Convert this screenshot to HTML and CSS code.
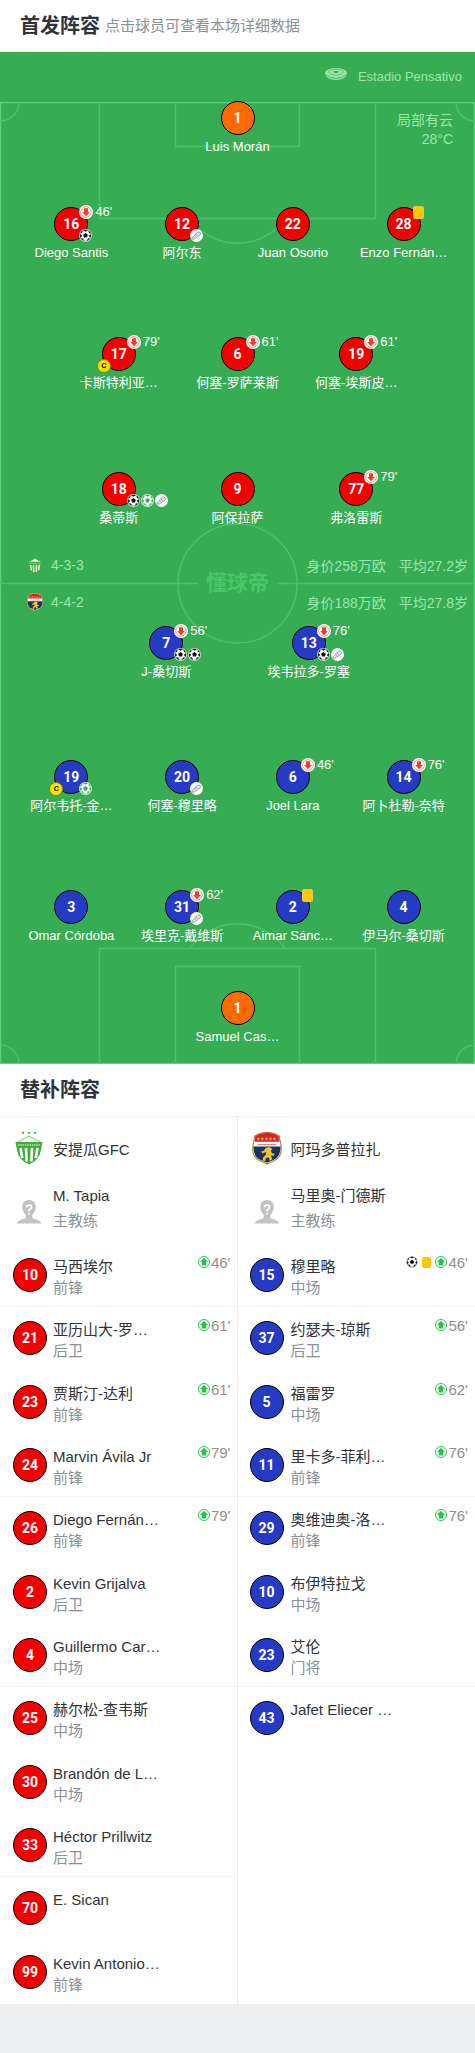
FILE: index.html
```
<!DOCTYPE html>
<html lang="zh-CN">
<head>
    <meta charset="UTF-8">
    <meta name="viewport" content="width=device-width, initial-scale=1.0">
    <title>首发阵容</title>
    <link rel="stylesheet" href="styles.css">
</head>
<body>
    <!-- Icônes partagées -->
    <svg class="defs" aria-hidden="true">
        <symbol id="i-ball" viewBox="0 0 14 14">
            <circle cx="7" cy="7" r="7" fill="#fff"/>
            <circle cx="7" cy="7" r="6" fill="none" stroke="currentColor" stroke-width=".5"/>
            <path fill="currentColor" d="M7 4.400l2.500 1.800-.9 2.900H5.400l-.9-2.900zM4.600 1.300Q7 .3 9.400 1.300L7 3zM13 5.700q.2 2-.8 3.900l-1.600-2.200zM1 5.700q-.2 2 .8 3.900l1.600-2.200zM9.400 10.300l2.500-.3q-1.200 1.900-3.200 2.700zM4.600 10.300L2.100 10q1.200 1.900 3.200 2.700zM10.500 1.900q1.400 1 2.100 2.600l-2-.2zM3.500 1.900q-1.400 1-2.100 2.600l2-.2z"/>
        </symbol>
        <symbol id="i-boot" viewBox="0 0 14 14">
            <circle cx="7" cy="7" r="7" fill="#fff"/>
            <path fill="#e4e4e4" stroke="#777" stroke-width=".7" d="M2 9.500Q5 8 6.500 4.600L9 3l2.600 1.500Q11 7.500 8.300 8.200L5 10.700 2.400 11z"/>
            <path fill="none" stroke="#888" stroke-width=".6" d="M6.300 5.500l2 1.500M5.300 7.200l1.500 1.400"/>
        </symbol>
        <symbol id="i-down" viewBox="0 0 14 14">
            <circle cx="7" cy="7" r="7" fill="#fff"/>
            <circle cx="7" cy="7" r="5.300" fill="none" stroke="#f77b6d" stroke-width=".8"/>
            <path fill="#fa3b25" d="M5 3.300h4v3.700h1.900L7 11.200 3.100 7H5z"/>
        </symbol>
        <symbol id="i-up" viewBox="0 0 12 12">
            <circle cx="6" cy="6" r="5.500" fill="#fff" stroke="#2fc455" stroke-width="1"/>
            <path fill="#20c840" d="M6 1.800l4 4.100H8.200v3.500H3.800V5.900H2z"/>
        </symbol>
        <symbol id="i-stadium" viewBox="0 0 22 12">
            <ellipse cx="11" cy="5" rx="11" ry="5" fill="#9ae6aa"/>
            <path d="M0 5q1 7 11 7t11-7q-3 5-11 5T0 5z" fill="#9ae6aa"/>
            <ellipse cx="11" cy="4" rx="7" ry="3" fill="none" stroke="#37ad53" stroke-width=".6"/>
            <ellipse cx="11" cy="4" rx="3" ry="1" fill="#37ad53"/>
            <path d="M1 7q4 3.500 10 3.500T21 7" fill="none" stroke="#37ad53" stroke-width=".7"/>
        </symbol>
        <symbol id="i-antigua" viewBox="0 0 28 34">
            <path fill="#3fae3a" d="M8 0l.5 1.300h1.400L8.800 2.100l.4 1.300L8 2.600l-1.200.8.400-1.300L6.100 1.300h1.400zM14 0l.5 1.300h1.400l-1.100.8.400 1.300-1.200-.8-1.200.8.400-1.300-1.100-.8h1.400zM20 0l.5 1.300h1.400l-1.100.8.400 1.300-1.200-.8-1.200.8.400-1.300-1.100-.8h1.400z"/>
            <path fill="#fff" stroke="#55bd50" stroke-width=".8" d="M2 11.500L14 5l12 6.500z"/>
            <path fill="#3fae3a" d="M.500 11h27l-1.500 8q-1.500 10-12 14.500Q3.500 29 2 19z"/>
            <path stroke="#fff" stroke-width="2.600" d="M5.500 17l1.800 10M11 17l.6 13.500M17 17l-.6 13.500M22.500 17l-1.800 10"/>
            <path fill="none" stroke="#b7e2b2" stroke-width="1.400" stroke-dasharray="1.500 .8" d="M3 14h22"/>
        </symbol>
        <symbol id="i-amat" viewBox="0 0 31 34">
            <path fill="#fff" stroke="#b4883b" stroke-width="1.200" d="M15.500.700q5 .3 9 1.800l4 2.300q-.5 3 .8 5.200l1 7.500q0 9-7 12.500-4 2-7.800 3.400-3.800-1.400-7.800-3.400-7-3.500-7-12.500l1-7.500q1.300-2.200.8-5.200l4-2.300q4-1.500 9-1.800z"/>
            <path fill="#d7232b" d="M15.500 1.300q5 .3 9 1.800l3.300 2q-.5 2.700.8 5.400H2.400q1.300-2.700.8-5.400l3.300-2q4-1.500 9-1.800z"/>
            <path fill="#17335f" d="M1.500 15.500h28q.3 10-6.500 13.500-4 2-7.500 3.300Q12 31 8 29 1.200 25.500 1.500 15.500z"/>
            <path stroke="#f4d03c" stroke-width="2" stroke-dasharray="2 2.200" d="M5.500 7.500h21"/>
            <path stroke="#e56b70" d="M6 13.500h19"/>
            <path fill="#f0c230" d="M14 17l4-1 3 2-1.500 1.500 1 3 3 .5-1 2-3-.3 1.500 4-2.500 1.500-1.300-3.700-3 1-.2 2.700h-3l.5-3.500 3-3-.3-2.500-3 1.500L9 21l3.500-1.500z"/>
        </symbol>
        <symbol id="i-coach" viewBox="0 0 24 24">
            <path fill="#c3c3c3" d="M12 0c4.500 0 7 3 6.800 7.500-.2 3.500-2 5.500-3.500 7.500v2.500q0 1.200 3 1.800 5.500 1.200 5.700 4.200H0q.2-3 5.700-4.200 3-.6 3-1.800V15C7.200 13 5.400 11 5.200 7.500 5 3 7.500 0 12 0z"/>
            <path fill="none" stroke="#fff" stroke-width="1.600" d="M9.500 7.300Q9.500 5 12 5t2.500 2.300Q14.500 9 12 10v1.500M12 12.700v1.700"/>
        </symbol>
    </svg>

    <header class="title-bar">
        <h1>首发阵容</h1>
        <span>点击球员可查看本场详细数据</span>
    </header>

    <main class="pitch">
        <!-- Lignes du terrain -->
        <svg class="lines" viewBox="0 0 475 962" preserveAspectRatio="none" aria-hidden="true">
            <path class="edge" d="M.5.5h474v961H.5z"/>
            <path d="M99.500 0v116.500h276V0M175.500 0v44.500h124V0M99.500 962V846.500h276V962M175.500 962v-97.500h124V962"/>
            <path d="M190 116.500a58 58 0 0 0 95 0M190 846.500a58 58 0 0 1 95 0"/>
            <path d="M0 19a19 19 0 0 0 19-19M475 19a19 19 0 0 1-19-19M0 943a19 19 0 0 1 19 19M475 943a19 19 0 0 0-19 19"/>
            <circle cx="237.500" cy="481.500" r="59.500"/>
            <path d="M0 481.500h198M277 481.500h198"/>
        </svg>
        <div class="watermark">懂球帝</div>
        <div class="weather">局部有云<br>28°C</div>

        <div class="stadium">
            <svg><use href="#i-stadium"/></svg>
            <span>Estadio Pensativo</span>
        </div>

        <section class="team home">
            <div class="line one">
                <a class="player" href="#"><span class="num keeper">1</span><span class="name">Luis Morán</span></a>
            </div>
            <div class="line four">
                <a class="player" href="#"><span class="num">16<i class="off"><svg><use href="#i-down"/></svg>46'</i><i class="events"><svg><use href="#i-ball"/></svg></i></span><span class="name">Diego Santis</span></a>
                <a class="player" href="#"><span class="num">12<i class="events"><svg><use href="#i-boot"/></svg></i></span><span class="name">阿尔东</span></a>
                <a class="player" href="#"><span class="num">22</span><span class="name">Juan Osorio</span></a>
                <a class="player" href="#"><span class="num">28<i class="card"></i></span><span class="name">Enzo Fernán…</span></a>
            </div>
            <div class="line three">
                <a class="player" href="#"><span class="num">17<i class="off"><svg><use href="#i-down"/></svg>79'</i><i class="captain">C</i></span><span class="name">卡斯特利亚…</span></a>
                <a class="player" href="#"><span class="num">6<i class="off"><svg><use href="#i-down"/></svg>61'</i></span><span class="name">何塞-罗萨莱斯</span></a>
                <a class="player" href="#"><span class="num">19<i class="off"><svg><use href="#i-down"/></svg>61'</i></span><span class="name">何塞-埃斯皮…</span></a>
            </div>
            <div class="line three">
                <a class="player" href="#"><span class="num">18<i class="events"><svg><use href="#i-ball"/></svg><svg class="penalty"><use href="#i-ball"/></svg><svg><use href="#i-boot"/></svg></i></span><span class="name">桑蒂斯</span></a>
                <a class="player" href="#"><span class="num">9</span><span class="name">阿保拉萨</span></a>
                <a class="player" href="#"><span class="num">77<i class="off"><svg><use href="#i-down"/></svg>79'</i></span><span class="name">弗洛雷斯</span></a>
            </div>
        </section>

        <div class="info">
            <svg><use href="#i-antigua"/></svg>
            <span class="formation">4-3-3</span>
            <span>身价258万欧</span>
            <span>平均27.2岁</span>
        </div>
        <div class="info">
            <svg><use href="#i-amat"/></svg>
            <span class="formation">4-4-2</span>
            <span>身价188万欧</span>
            <span>平均27.8岁</span>
        </div>

        <section class="team away">
            <div class="line two">
                <a class="player" href="#"><span class="num">7<i class="off"><svg><use href="#i-down"/></svg>56'</i><i class="events"><svg><use href="#i-ball"/></svg><svg><use href="#i-ball"/></svg></i></span><span class="name">J-桑切斯</span></a>
                <a class="player" href="#"><span class="num">13<i class="off"><svg><use href="#i-down"/></svg>76'</i><i class="events"><svg><use href="#i-ball"/></svg><svg><use href="#i-boot"/></svg></i></span><span class="name">埃韦拉多-罗塞</span></a>
            </div>
            <div class="line four">
                <a class="player" href="#"><span class="num">19<i class="captain">C</i><i class="events"><svg class="penalty"><use href="#i-ball"/></svg></i></span><span class="name">阿尔韦托-金…</span></a>
                <a class="player" href="#"><span class="num">20<i class="events"><svg><use href="#i-boot"/></svg></i></span><span class="name">何塞-穆里略</span></a>
                <a class="player" href="#"><span class="num">6<i class="off"><svg><use href="#i-down"/></svg>46'</i></span><span class="name">Joel Lara</span></a>
                <a class="player" href="#"><span class="num">14<i class="off"><svg><use href="#i-down"/></svg>76'</i></span><span class="name">阿卜杜勒-奈特</span></a>
            </div>
            <div class="line four last">
                <a class="player" href="#"><span class="num">3</span><span class="name">Omar Córdoba</span></a>
                <a class="player" href="#"><span class="num">31<i class="off"><svg><use href="#i-down"/></svg>62'</i><i class="events"><svg><use href="#i-boot"/></svg></i></span><span class="name">埃里克-戴维斯</span></a>
                <a class="player" href="#"><span class="num">2<i class="card"></i></span><span class="name">Aimar Sánc…</span></a>
                <a class="player" href="#"><span class="num">4</span><span class="name">伊马尔-桑切斯</span></a>
            </div>
            <div class="line one">
                <a class="player" href="#"><span class="num keeper">1</span><span class="name">Samuel Cas…</span></a>
            </div>
        </section>
    </main>

    <h2 class="subs-title">替补阵容</h2>

    <section class="subs">
        <div class="column home">
            <div class="club"><svg><use href="#i-antigua"/></svg><span>安提瓜GFC</span></div>
            <div class="coach"><svg><use href="#i-coach"/></svg><div><p>M. Tapia</p><p class="role">主教练</p></div></div>
            <a class="sub" href="#"><span class="num">10</span><span class="who">马西埃尔<small>前锋</small></span><span class="on"><svg><use href="#i-up"/></svg>46'</span></a>
            <a class="sub" href="#"><span class="num">21</span><span class="who">亚历山大-罗…<small>后卫</small></span><span class="on"><svg><use href="#i-up"/></svg>61'</span></a>
            <a class="sub" href="#"><span class="num">23</span><span class="who">贾斯汀-达利<small>前锋</small></span><span class="on"><svg><use href="#i-up"/></svg>61'</span></a>
            <a class="sub" href="#"><span class="num">24</span><span class="who">Marvin Ávila Jr<small>前锋</small></span><span class="on"><svg><use href="#i-up"/></svg>79'</span></a>
            <a class="sub" href="#"><span class="num">26</span><span class="who">Diego Fernán…<small>前锋</small></span><span class="on"><svg><use href="#i-up"/></svg>79'</span></a>
            <a class="sub" href="#"><span class="num">2</span><span class="who">Kevin Grijalva<small>后卫</small></span></a>
            <a class="sub" href="#"><span class="num">4</span><span class="who">Guillermo Car…<small>中场</small></span></a>
            <a class="sub" href="#"><span class="num">25</span><span class="who">赫尔松-查韦斯<small>中场</small></span></a>
            <a class="sub" href="#"><span class="num">30</span><span class="who">Brandón de L…<small>中场</small></span></a>
            <a class="sub" href="#"><span class="num">33</span><span class="who">Héctor Prillwitz<small>后卫</small></span></a>
            <a class="sub" href="#"><span class="num">70</span><span class="who">E. Sican</span></a>
            <a class="sub" href="#"><span class="num">99</span><span class="who">Kevin Antonio…<small>前锋</small></span></a>
        </div>
        <div class="column away">
            <div class="club"><svg><use href="#i-amat"/></svg><span>阿玛多普拉扎</span></div>
            <div class="coach"><svg><use href="#i-coach"/></svg><div><p>马里奥-门德斯</p><p class="role">主教练</p></div></div>
            <a class="sub" href="#"><span class="num">15</span><span class="who">穆里略<small>中场</small></span><span class="on"><svg class="goal"><use href="#i-ball"/></svg><i class="yellow"></i><svg><use href="#i-up"/></svg>46'</span></a>
            <a class="sub" href="#"><span class="num">37</span><span class="who">约瑟夫-琼斯<small>后卫</small></span><span class="on"><svg><use href="#i-up"/></svg>56'</span></a>
            <a class="sub" href="#"><span class="num">5</span><span class="who">福雷罗<small>中场</small></span><span class="on"><svg><use href="#i-up"/></svg>62'</span></a>
            <a class="sub" href="#"><span class="num">11</span><span class="who">里卡多-菲利…<small>前锋</small></span><span class="on"><svg><use href="#i-up"/></svg>76'</span></a>
            <a class="sub" href="#"><span class="num">29</span><span class="who">奥维迪奥-洛…<small>前锋</small></span><span class="on"><svg><use href="#i-up"/></svg>76'</span></a>
            <a class="sub" href="#"><span class="num">10</span><span class="who">布伊特拉戈<small>中场</small></span></a>
            <a class="sub" href="#"><span class="num">23</span><span class="who">艾伦<small>门将</small></span></a>
            <a class="sub" href="#"><span class="num">43</span><span class="who">Jafet Eliecer …</span></a>
        </div>
    </section>
</body>
</html>
```
FILE: styles.css
```
* {
    box-sizing: border-box;
}

body {
    margin: 0;
    font-family: "Liberation Sans", "Noto Sans CJK SC", sans-serif;
    font-size: 15px;
    color: #303338;
    background-color: #edeff1;
}

a {
    color: inherit;
    text-decoration: none;
}

i {
    font-style: normal;
}

svg {
    flex: none;
}

.defs {
    display: none;
}

.title-bar {
    display: flex;
    align-items: center;
    gap: 5px;
    height: 52px;
    padding: 0 20px 2px;
    background-color: #fff;
    border-bottom: 1px solid #edeff1;
    color: #8a9097;
}

h1, h2 {
    margin: 0;
    font-size: 20px;
    color: #303338;
}

/* Terrain */
.pitch {
    position: relative;
    padding-bottom: 17px;
    background-color: #37ad53;
    color: #fff;
}

.lines {
    position: absolute;
    left: 0;
    top: 50px;
    width: 100%;
    height: calc(100% - 50px);
    fill: none;
    stroke: #4bc268;
    stroke-width: 1.5px;
}

.lines .edge {
    stroke: #5dd37a;
}

.watermark {
    position: absolute;
    left: 0;
    right: 0;
    top: 516px;
    line-height: 30px;
    text-align: center;
    font-size: 21px;
    font-weight: bold;
    color: #47c766;
}

.weather {
    position: absolute;
    right: 22px;
    top: 59px;
    line-height: 19px;
    text-align: right;
    font-size: 14px;
    color: #9ae6aa;
}

.stadium {
    display: flex;
    justify-content: flex-end;
    align-items: center;
    gap: 11px;
    height: 49px;
    padding-right: 13px;
    font-size: 13px;
    color: #9ae6aa;
}

.stadium svg {
    width: 22px;
    height: 12px;
    margin-bottom: 6px;
}

.team {
    position: relative;
}

.team.home {
    height: 445px;
}

.team.away {
    padding-top: 6px;
}

.line {
    display: grid;
    grid-auto-flow: column;
    grid-auto-columns: 1fr;
}

.line.one {
    margin-bottom: 50px;
}

.line.two {
    margin-bottom: 78px;
    padding: 0 20%;
}

.line.three {
    margin-bottom: 79px;
    padding: 0 12.5%;
}

.line.four {
    margin-bottom: 74px;
    padding: 0 16px;
}

.line.last {
    margin-bottom: 45px;
}

.away .line.one {
    margin-bottom: 0;
}

.player {
    display: flex;
    flex-direction: column;
    align-items: center;
    gap: 2px;
}

.name {
    line-height: 20px;
    font-size: 13px;
    white-space: nowrap;
}

.num {
    position: relative;
    flex: none;
    width: 34px;
    height: 34px;
    border: 1px solid #000;
    border-radius: 50%;
    line-height: 32px;
    text-align: center;
    font-family: Roboto, sans-serif;
    font-size: 14px;
    font-weight: bold;
    color: #fff;
    background-color: #f50000;
}

.away .num {
    background-color: #263bc4;
}

.away .num.keeper, .num.keeper {
    background-color: #ff6a00;
}

.off {
    position: absolute;
    left: 24px;
    top: -3px;
    display: flex;
    align-items: center;
    gap: 2px;
    line-height: 14px;
    font-family: "Liberation Sans", sans-serif;
    font-size: 13px;
    font-weight: normal;
}

.off svg {
    width: 14px;
    height: 14px;
}

.events {
    position: absolute;
    left: 24px;
    top: 21px;
    display: flex;
    gap: 1px;
    color: #111;
}

.events svg {
    width: 13px;
    height: 13px;
}

.events .penalty {
    color: #37ad53;
}

.captain {
    position: absolute;
    left: -6px;
    top: 21px;
    width: 14px;
    height: 14px;
    border: 1px solid #8a8500;
    border-radius: 50%;
    line-height: 12px;
    font-size: 8px;
    color: #222;
    background-color: #ffe100;
}

.card {
    position: absolute;
    left: 25px;
    top: -2px;
    width: 11px;
    height: 13px;
    border: 1px solid #e2c35a;
    border-radius: 2px;
    background-color: #ffc900;
}

.info {
    position: relative;
    display: flex;
    align-items: center;
    gap: 13px;
    height: 37px;
    padding: 0 7px 0 26px;
    font-size: 14px;
    color: #9ae6aa;
}

.info svg {
    width: 18px;
    height: 18px;
    margin-right: -6px;
}

.formation {
    flex: 1;
}

/* Remplaçants */
.subs-title {
    height: 53px;
    padding: 0 20px;
    line-height: 52px;
    background-color: #fff;
    border-bottom: 1px solid #edeff1;
}

.subs {
    display: grid;
    grid-template-columns: 1fr 1fr;
    background-color: #fff;
}

.column.home {
    border-right: 1px solid #e8eaec;
}

.club, .coach {
    display: flex;
    align-items: center;
    gap: 9px;
    padding-left: 14px;
}

.club {
    height: 64px;
    padding-bottom: 2px;
}

.club svg {
    width: 30px;
    height: 34px;
}

.coach {
    height: 63px;
    padding-bottom: 10px;
}

.coach svg {
    width: 24px;
    height: 24px;
    margin: 8px 3px 0;
}

.coach p {
    margin: 0;
    line-height: 25px;
}

.coach .role {
    color: #8a9097;
}

.sub {
    display: flex;
    gap: 7px;
    height: 63px;
    padding: 14px 7px 0 12px;
}

.home .sub {
    gap: 6px;
    padding: 14px 6px 0 13px;
}

.sub:nth-child(3n) {
    border-bottom: 1px solid #f3f5f6;
}

.sub:nth-child(3n + 1) {
    height: 64px;
}

.who {
    flex: 1;
    margin-top: -2px;
    line-height: 21px;
    white-space: nowrap;
}

.who small {
    display: block;
    font-size: 15px;
    color: #8a9097;
}

.on {
    display: flex;
    align-items: center;
    gap: 1px;
    height: 18px;
    margin-top: -5px;
    color: #8f8f8f;
}

.on svg {
    width: 12px;
    height: 12px;
}

.on .goal {
    margin-right: 3px;
    color: #111;
}

.yellow {
    width: 9px;
    height: 11px;
    margin-right: 3px;
    border-radius: 2px;
    background-color: #ffc900;
}
```
